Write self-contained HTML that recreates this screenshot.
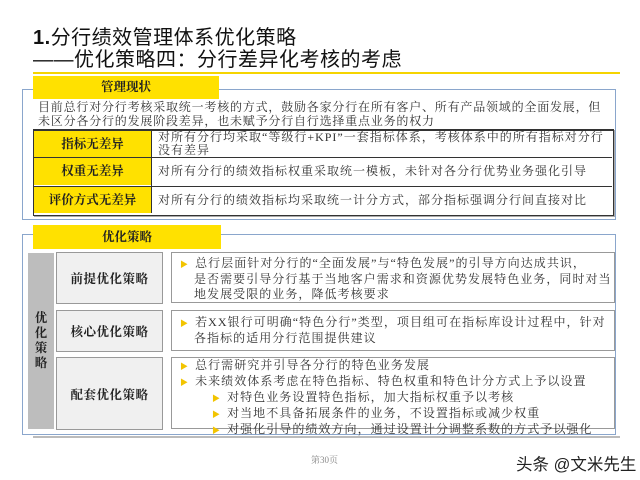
<!DOCTYPE html>
<html><head><meta charset="utf-8"><style>
body{margin:0;width:640px;height:480px;background:#fff;position:relative;overflow:hidden;font-family:"Liberation Serif","Noto Serif CJK SC",serif;color:#222}
.a{position:absolute}
.t{font-family:"Liberation Sans","Noto Sans CJK SC",sans-serif;font-size:20px;color:#111;left:33px;letter-spacing:0.5px;white-space:nowrap}
.y{background:#ffe100;font-weight:bold;font-size:12.5px;text-align:center}
.s{font-size:12px;line-height:14px;color:#333;white-space:nowrap;letter-spacing:1px}
.lb{background:#f0f0f0;border:1px solid #999;font-weight:bold;font-size:12.5px;display:flex;align-items:center;justify-content:center;letter-spacing:0.5px}
.rb{border:1px solid #999;font-size:12px;line-height:15px;color:#333;padding:2px 8px;box-sizing:border-box;white-space:nowrap;letter-spacing:1.05px}
.tri{color:#f2c400;font-size:8px;margin-right:6px}
</style></head><body>
<div class="a t" style="top:21px"><b>1.</b>分行绩效管理体系优化策略</div>
<div class="a t" style="top:43px">——优化策略四：分行差异化考核的考虑</div>
<div class="a" style="left:33px;top:72px;width:587px;height:2px;background:#f5d400"></div>

<div class="a" style="left:22px;top:89px;width:592px;height:129px;border:1px solid #8aa6cc"></div>
<div class="a y" style="left:33px;top:76px;width:186px;height:23px;line-height:23px">管理现状</div>
<div class="a s" style="left:38px;top:100px;letter-spacing:0.8px">目前总行对分行考核采取统一考核的方式，鼓励各家分行在所有客户、所有产品领域的全面发展，但<br>未区分各分行的发展阶段差异，也未赋予分行自行选择重点业务的权力</div>
<div class="a" style="left:33px;top:129px;width:579px;height:84px;border:1px solid #333;border-top-width:2px;box-shadow:1px 1px 0 #aaa"></div>
<div class="a y" style="left:34px;top:131px;width:117px;height:26px;line-height:26px">指标无差异</div>
<div class="a y" style="left:34px;top:158px;width:117px;height:27px;line-height:27px">权重无差异</div>
<div class="a y" style="left:34px;top:187px;width:117px;height:26px;line-height:26px">评价方式无差异</div>
<div class="a" style="left:151px;top:130px;width:1px;height:83px;background:#333"></div>
<div class="a" style="left:34px;top:157px;width:578px;height:1px;background:#333"></div>
<div class="a" style="left:34px;top:186px;width:578px;height:1px;background:#333"></div>
<div class="a s" style="left:158px;top:131px;line-height:13px">对所有分行均采取“等级行+KPI”一套指标体系，考核体系中的所有指标对分行<br>没有差异</div>
<div class="a s" style="left:158px;top:164px">对所有分行的绩效指标权重采取统一模板，未针对各分行优势业务强化引导</div>
<div class="a s" style="left:158px;top:193px">对所有分行的绩效指标均采取统一计分方式，部分指标强调分行间直接对比</div>

<div class="a" style="left:22px;top:234px;width:592px;height:199px;border:1px solid #8aa6cc"></div>
<div class="a y" style="left:33px;top:225px;width:188px;height:24px;line-height:24px">优化策略</div>
<div class="a" style="left:28px;top:253px;width:26px;height:176px;background:#bdbdbd;font-weight:bold;font-size:12.5px;line-height:15px;display:flex;align-items:center;justify-content:center;text-align:center">优<br>化<br>策<br>略</div>
<div class="a lb" style="left:56px;top:252px;width:105px;height:50px">前提优化策略</div>
<div class="a lb" style="left:56px;top:310px;width:105px;height:40px">核心优化策略</div>
<div class="a lb" style="left:56px;top:357px;width:105px;height:71px">配套优化策略</div>
<div class="a rb" style="left:171px;top:252px;width:444px;height:51px;padding-top:3px"><span class="tri">▶</span>总行层面针对分行的“全面发展”与“特色发展”的引导方向达成共识，<br><span style="padding-left:14px">是否需要引导分行基于当地客户需求和资源优势发展特色业务，同时对当</span><br><span style="padding-left:14px">地发展受限的业务，降低考核要求</span></div>
<div class="a rb" style="left:171px;top:310px;width:444px;height:41px;padding-top:4px"><span class="tri">▶</span>若XX银行可明确“特色分行”类型，项目组可在指标库设计过程中，针对<br><span style="padding-left:14px">各指标的适用分行范围提供建议</span></div>
<div class="a rb" style="left:171px;top:357px;width:444px;height:72px;padding-top:0;line-height:14px"><span class="tri">▶</span>总行需研究并引导各分行的特色业务发展<br><span class="tri">▶</span>未来绩效体系考虑在特色指标、特色权重和特色计分方式上予以设置<br><span style="padding-left:32px"><span class="tri">▶</span>对特色业务设置特色指标，加大指标权重予以考核</span><br><span style="padding-left:32px"><span class="tri">▶</span>对当地不具备拓展条件的业务，不设置指标或减少权重</span><br><span style="padding-left:32px"><span class="tri">▶</span>对强化引导的绩效方向，通过设置计分调整系数的方式予以强化</span></div>
<div class="a" style="left:33px;top:436px;width:587px;height:2px;background:#bbb"></div>
<div class="a" style="left:311px;top:453px;font-size:9px;color:#888">第30页</div>
<div class="a" style="left:516px;top:451px;font-size:16.5px;color:#222;font-family:'Liberation Sans','Noto Sans CJK SC',sans-serif;white-space:nowrap">头条 @文米先生</div>
</body></html>
